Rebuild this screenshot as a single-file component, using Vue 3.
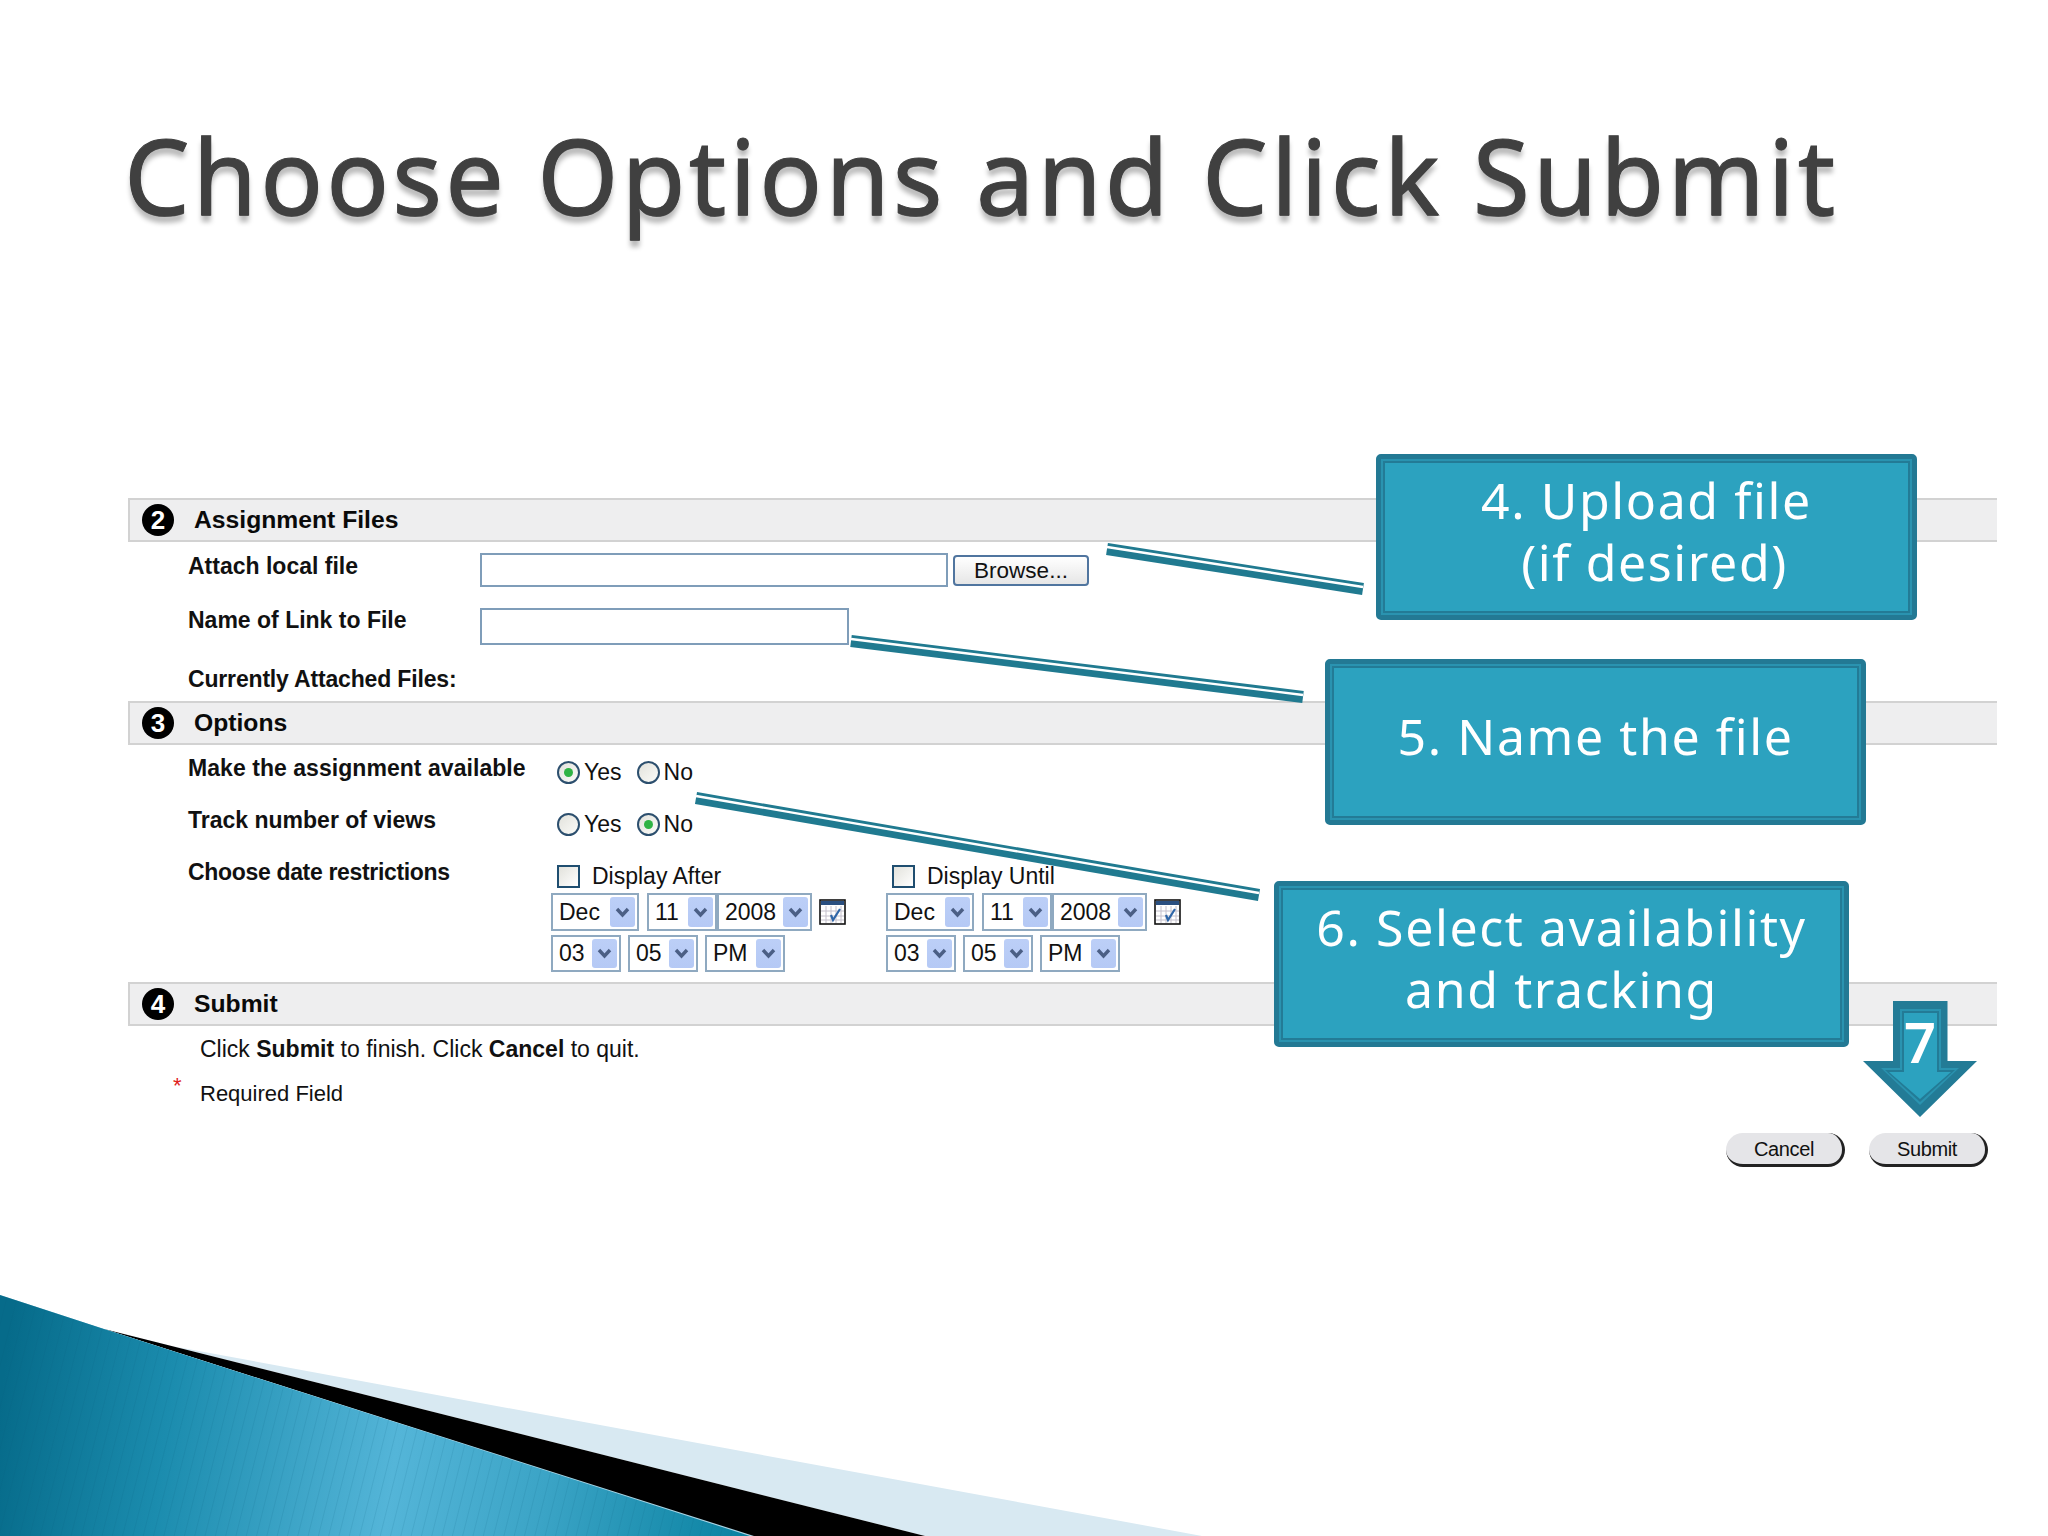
<script setup>
const row1 = [
  { v: 'Dec', c: 'w88 gap8' },
  { v: '11', c: 'w70' },
  { v: '2008', c: 'w95 gap7' }
]
const row2 = [
  { v: '03', c: 'w70 gap7' },
  { v: '05', c: 'w70 gap7' },
  { v: 'PM', c: 'w80' }
]
const groups = ['Display After', 'Display Until']
const callouts = [
  { c: 'c4', lines: ['4. Upload file', '(if desired)'] },
  { c: 'c5', lines: ['5. Name the file'] },
  { c: 'c6', lines: ['6. Select availability', 'and tracking'] }
]
const leaders = [
  [1107, 549, 1363, 589],
  [851, 641, 1303, 697],
  [696, 798, 1259, 895]
]
</script>

<template>
  <div class="slide">
    <h1 class="title">Choose Options and Click Submit</h1>

    <div class="form">
      <div class="head"><span class="badge">2</span><span class="htext">Assignment Files</span></div>
      <div class="body files">
        <div class="row r55">
          <span class="label lab-file">Attach local file</span>
          <span class="input i1"></span>
          <span class="browse">Browse...</span>
        </div>
        <div class="row r58">
          <span class="label lab-file lab-up">Name of Link to File</span>
          <span class="input i2"></span>
        </div>
        <div class="row"><span class="label tight">Currently Attached Files:</span></div>
      </div>

      <div class="head"><span class="badge">3</span><span class="htext">Options</span></div>
      <div class="body options">
        <div class="row r52">
          <span class="label lab-opt wide">Make the assignment available</span>
          <div class="radios">
            <span class="radio on"></span><span class="rt">Yes</span>
            <span class="radio second"></span><span class="rt">No</span>
          </div>
        </div>
        <div class="row r52">
          <span class="label lab-opt">Track number of views</span>
          <div class="radios">
            <span class="radio"></span><span class="rt">Yes</span>
            <span class="radio second on"></span><span class="rt">No</span>
          </div>
        </div>
        <div class="row">
          <span class="label lab-opt tighter">Choose date restrictions</span>
          <div class="dates">
            <div v-for="g in groups" :key="g" class="dgroup">
              <div class="check"><span class="box"></span><span>{{ g }}</span></div>
              <div class="selrow top">
                <div v-for="s in row1" :key="s.v" class="sel" :class="s.c">
                  <span>{{ s.v }}</span>
                  <span class="drop"><svg width="15" height="11" viewBox="0 0 15 11"><path d="M2 2 L7.500 8 L13 2" fill="none" stroke="#4b5f85" stroke-width="3.400"/></svg></span>
                </div>
                <svg class="cal" width="27" height="26" viewBox="0 0 27 26">
                  <rect x="1" y="1" width="25" height="24" fill="#fff" stroke="#111" stroke-width="1.600"/>
                  <rect x="2" y="2" width="23" height="4" fill="#2a4f80"/>
                  <path d="M7 7V24M12 7V24M17 7V24M22 7V24M2 12H25M2 17H25M2 21H25" stroke="#c4c0cc" stroke-width="1"/>
                  <path d="M12 16 L14 21 L21 10" fill="none" stroke="#2f66a8" stroke-width="2.200"/>
                </svg>
              </div>
              <div class="selrow">
                <div v-for="s in row2" :key="s.v" class="sel short" :class="s.c">
                  <span>{{ s.v }}</span>
                  <span class="drop"><svg width="15" height="11" viewBox="0 0 15 11"><path d="M2 2 L7.500 8 L13 2" fill="none" stroke="#4b5f85" stroke-width="3.400"/></svg></span>
                </div>
              </div>
            </div>
          </div>
        </div>
      </div>

      <div class="head"><span class="badge">4</span><span class="htext">Submit</span></div>
      <div class="body submit">
        <p class="line">Click <b>Submit</b> to finish. Click <b>Cancel</b> to quit.</p>
        <p class="line req"><span class="star">*</span>Required Field</p>
        <div class="buttons">
          <span class="pill">Cancel</span>
          <span class="pill">Submit</span>
        </div>
      </div>
    </div>

    <svg class="overlay" width="2048" height="1536" viewBox="0 0 2048 1536">
      <defs>
        <linearGradient id="teal" gradientUnits="userSpaceOnUse" x1="0" y1="1400" x2="760" y2="1500">
          <stop offset="0" stop-color="#066b8a"/>
          <stop offset="0.22" stop-color="#1b8cae"/>
          <stop offset="0.52" stop-color="#54b5d8"/>
          <stop offset="0.72" stop-color="#3ba4c6"/>
          <stop offset="1" stop-color="#07809f"/>
        </linearGradient>
        <pattern id="stripes" width="10" height="10" patternUnits="userSpaceOnUse" patternTransform="rotate(14)">
          <rect x="0" y="0" width="1" height="10" fill="#0b5f7c" fill-opacity="0.12"/>
        </pattern>
      </defs>
      <polygon points="166,1345 1202,1536 925,1536 104,1329" fill="#d8e9f2"/>
      <polygon points="104,1329 925,1536 750,1536" fill="#000"/>
      <path d="M0 1295 L104 1329 L754 1536 L0 1536 Z" fill="#a9d4e4"/>
      <path d="M0 1295 L104 1329 L750 1536 L0 1536 Z" fill="url(#teal)"/>
      <path d="M0 1295 L104 1329 L750 1536 L0 1536 Z" fill="url(#stripes)"/>
      <g v-for="(l, i) in leaders" :key="i">
        <line :x1="l[0]" :y1="l[1]" :x2="l[2]" :y2="l[3]" stroke="#207a90" stroke-width="12"/>
        <line :x1="l[0]" :y1="l[1] - 2" :x2="l[2]" :y2="l[3] - 2" stroke="#fff" stroke-width="2.400"/>
      </g>
    </svg>

    <div v-for="c in callouts" :key="c.c" class="callout" :class="c.c">
      <div v-for="(t, i) in c.lines" :key="i" :class="'ln' + i">{{ t }}</div>
    </div>

    <div class="arrow">
      <svg width="114" height="116" viewBox="0 0 114 116">
        <polygon points="30,0 84.500,0 84.500,60 114,60 57,116 0,60 30,60" fill="#237b96"/>
        <polygon points="37,8 78,8 78,67 96,67 57,104 18,67 37,67" fill="#2a93b0"/>
        <polygon points="39,10 76,10 76,69 92,69 57,101 22,69 39,69" fill="#237b96"/>
        <polygon points="41,12 74,12 74,71 88,71 57,98 26,71 41,71" fill="#2ca2bf"/>
      </svg>
      <span class="seven">7</span>
    </div>
  </div>
</template>

<style>
html, body { margin: 0; background: #fff; }
</style>

<style scoped>
.slide {
  position: relative;
  width: 2048px;
  height: 1536px;
  overflow: hidden;
  background: #fff;
  font-family: "Liberation Sans", Arial, sans-serif;
  color: #111;
}
.title {
  margin: 0;
  height: 498px;
  box-sizing: border-box;
  padding: 100px 0 0 124px;
  font-family: "Noto Sans", sans-serif;
  font-weight: 400;
  font-size: 104px;
  line-height: 150px;
  letter-spacing: 3.130px;
  white-space: nowrap;
  color: #404040;
  -webkit-text-stroke: 1px #404040;
  text-shadow: 0 1px 0 #666, 0 7px 5px rgba(0, 0, 0, 0.28);
}
.form {
  margin-left: 128px;
  width: 1869px;
}
.head {
  height: 44px;
  box-sizing: border-box;
  display: flex;
  align-items: center;
  background: #eeeeef;
  border: 2px solid #d2d2d2;
  border-right: 0;
  padding-left: 12px;
}
.badge {
  width: 32px;
  height: 32px;
  border-radius: 50%;
  background: #000;
  color: #fff;
  font-weight: 700;
  font-size: 26px;
  line-height: 32px;
  text-align: center;
  flex: none;
}
.htext {
  margin-left: 20px;
  font-weight: 700;
  font-size: 24.7px;
  color: #0a0a0a;
}
.body { box-sizing: border-box; }
.files { height: 159px; padding: 11px 0 0 60px; }
.options { height: 237px; padding: 10px 0 0 60px; }
.submit { height: 200px; padding: 10px 0 0 72px; position: relative; }
.row { display: flex; align-items: flex-start; }
.r55 { height: 55px; }
.r58 { height: 58px; }
.r52 { height: 52px; }
.label {
  font-weight: 700;
  font-size: 23px;
  line-height: 26px;
  white-space: nowrap;
}
.tight { letter-spacing: -0.17px; }
.tighter { letter-spacing: -0.33px; }
.wide { letter-spacing: 0.05px; }
.lab-file { width: 292px; flex: none; }
.lab-up { margin-top: -1px; }
.lab-opt { width: 363px; flex: none; }
.input {
  box-sizing: border-box;
  background: #fff;
  border: 2px solid #7f9db9;
  flex: none;
}
.i1 { width: 468px; height: 34px; }
.i2 { width: 369px; height: 37px; }
.browse {
  box-sizing: border-box;
  margin: 2px 0 0 5px;
  width: 136px;
  height: 31px;
  border: 2px solid #50759f;
  border-radius: 4px;
  background: linear-gradient(#fff, #e6e6e6);
  text-align: center;
  font-size: 22.500px;
  line-height: 27px;
}
.radios {
  display: flex;
  align-items: center;
  margin-top: 4px;
  padding-left: 6px;
  height: 26px;
  font-size: 23px;
}
.radio {
  box-sizing: border-box;
  width: 23px;
  height: 23px;
  border-radius: 50%;
  border: 2px solid #2c4f6e;
  background: linear-gradient(135deg, #e2e2dc, #fbfbf8);
  position: relative;
  flex: none;
}
.radio.on::after {
  content: "";
  position: absolute;
  left: 5px;
  top: 5px;
  width: 9px;
  height: 9px;
  border-radius: 50%;
  background: #2fb344;
}
.rt { margin-left: 4px; }
.second { margin-left: 15px; }
.dates { display: flex; }
.dgroup { width: 335px; }
.check {
  display: flex;
  align-items: center;
  height: 26px;
  margin-top: 4px;
  padding-left: 6px;
  font-size: 23px;
}
.box {
  box-sizing: border-box;
  width: 23px;
  height: 23px;
  border: 2px solid #1f4e70;
  background: linear-gradient(135deg, #e2e2dc, #fff);
  margin-right: 12px;
}
.selrow { display: flex; align-items: center; margin-top: 4px; }
.selrow.top { margin-top: 4px; margin-bottom: 4px; }
.sel {
  box-sizing: border-box;
  height: 38px;
  border: 2px solid #8fa9c0;
  display: flex;
  align-items: center;
  justify-content: space-between;
  padding: 2px 2px 2px 6px;
  font-size: 23px;
  background: #fff;
  flex: none;
}
.short { height: 37px; }
.w88 { width: 88px; }
.w70 { width: 70px; }
.w95 { width: 95px; }
.w80 { width: 80px; }
.gap8 { margin-right: 8px; }
.gap7 { margin-right: 7px; }
.drop {
  width: 25px;
  height: 100%;
  border-radius: 3px;
  background: linear-gradient(#bccff7, #b5c9f5);
  display: flex;
  align-items: center;
  justify-content: center;
  flex: none;
}
.cal { flex: none; }
.line { margin: 0; font-size: 23px; line-height: 26px; white-space: nowrap; }
.req { margin-top: 19px; position: relative; font-size: 22px; }
.star {
  position: absolute;
  left: -27px;
  top: -8px;
  color: #e02020;
  font-size: 22px;
}
.buttons {
  position: absolute;
  left: 1598px;
  top: 107px;
  display: flex;
  gap: 24px;
}
.pill {
  box-sizing: border-box;
  width: 119px;
  height: 34px;
  border-radius: 17px;
  background: #e5e5e8;
  border-right: 3px solid #222;
  border-bottom: 3px solid #222;
  text-align: center;
  font-size: 20px;
  letter-spacing: -0.4px;
  line-height: 32px;
}
.overlay { position: absolute; left: 0; top: 0; pointer-events: none; }
.callout {
  position: absolute;
  box-sizing: border-box;
  border: 5px solid #237994;
  border-radius: 5px;
  background: #2ca2bf;
  box-shadow: inset 0 0 0 2px #2a93b0, inset 0 0 0 4px #237b96;
  color: #fff;
  font-family: "Noto Sans", sans-serif;
  font-size: 50px;
  line-height: 62px;
  letter-spacing: 1.600px;
  text-align: center;
  white-space: nowrap;
}
.c4 { left: 1376px; top: 454px; width: 541px; height: 166px; padding-top: 10px; }
.c4 .ln1 { padding-left: 16px; }
.c5 { left: 1325px; top: 659px; width: 541px; height: 166px; padding-top: 41px; }
.c6 { left: 1274px; top: 881px; width: 575px; height: 166px; padding-top: 10px; }
.arrow {
  position: absolute;
  left: 1863px;
  top: 1001px;
  width: 114px;
  height: 116px;
}
.arrow svg { display: block; }
.seven {
  position: absolute;
  left: 0;
  top: 5px;
  width: 114px;
  text-align: center;
  color: #fff;
  font-family: "Noto Sans", sans-serif;
  font-weight: 600;
  font-size: 56px;
  line-height: 70px;
}
</style>
